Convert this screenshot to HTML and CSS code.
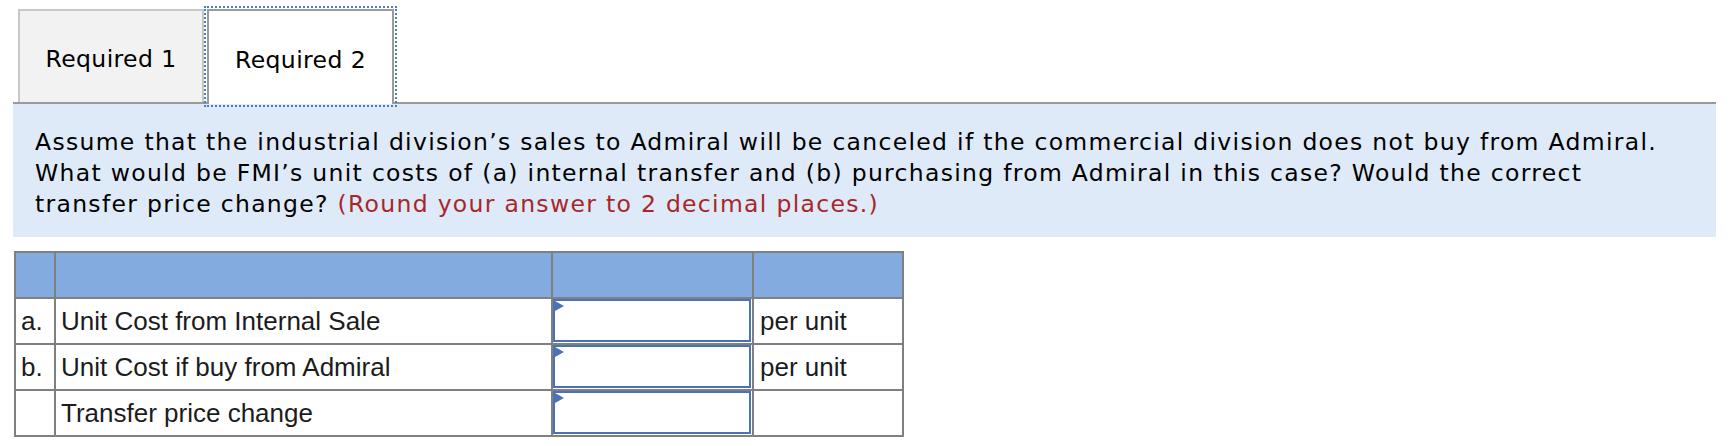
FILE: index.html
```html
<!DOCTYPE html>
<html lang="en">
<head>
<meta charset="utf-8">
<title>Required 2</title>
<link rel="stylesheet" href="styles.css">
</head>
<body>
<div class="page">
  <div class="tabs">
    <div class="tab">Required 1</div>
    <div class="tab active">Required 2</div>
  </div>
  <div class="question">Assume that the industrial division’s sales to Admiral will be canceled if the commercial division does not buy from Admiral. What would be FMI’s unit costs of (a) internal transfer and (b) purchasing from Admiral in this case? Would the correct transfer price change? <span class="note">(Round your answer to 2 decimal places.)</span></div>
  <div class="answers">
    <div class="cell head"></div>
    <div class="cell head"></div>
    <div class="cell head"></div>
    <div class="cell head"></div>

    <div class="cell">a.</div>
    <div class="cell">Unit Cost from Internal Sale</div>
    <div class="cell entry"><span class="ans"><input class="field" type="text"></span></div>
    <div class="cell unit">per unit</div>

    <div class="cell">b.</div>
    <div class="cell">Unit Cost if buy from Admiral</div>
    <div class="cell entry"><span class="ans"><input class="field" type="text"></span></div>
    <div class="cell unit">per unit</div>

    <div class="cell"></div>
    <div class="cell">Transfer price change</div>
    <div class="cell entry"><span class="ans"><input class="field" type="text"></span></div>
    <div class="cell unit"></div>
  </div>
</div>
</body>
</html>
```

FILE: styles.css
```css
* { box-sizing: border-box; }

body {
  margin: 0;
  background: #ffffff;
  font-family: "DejaVu Sans", Verdana, sans-serif;
  color: #000000;
}

.page {
  margin-left: 13px;
  width: 1703px;
}

.tabs {
  display: flex;
  gap: 3px;
  padding: 9px 0 0 5px;
  border-bottom: 2px solid #9a9a9a;
}

.tab {
  width: 186px;
  height: 93px;
  display: flex;
  align-items: center;
  justify-content: center;
  padding-top: 4px;
  font-size: 23.5px;
  letter-spacing: 0.4px;
  background: #f2f2f2;
  border: 2px solid #c8c8c8;
  border-bottom: none;
}

.tab.active {
  width: 187px;
  height: 95px;
  margin-bottom: -2px;
  background: #ffffff;
  border-color: #9a9a9a;
  outline: 2px dotted #4a7cc6;
  outline-offset: 1px;
}

.question {
  background: #deeaf7;
  padding: 23px 40px 17px 22px;
  font-size: 23.5px;
  letter-spacing: 1.3px;
  line-height: 31px;
}

.note {
  color: #a8262a;
}

.answers {
  display: grid;
  grid-template-columns: 38px 495px 199px 148px;
  grid-auto-rows: 44px;
  gap: 2px;
  padding: 2px;
  margin: 14px 0 0 1px;
  width: max-content;
  background: #808080;
  font-family: "Liberation Sans", Arial, sans-serif;
  font-size: 26px;
  color: #1c1c1c;
}

.cell {
  display: flex;
  align-items: center;
  padding-left: 5px;
  background: #ffffff;
}

.cell.head {
  background: #84abdf;
}

.cell.unit {
  padding-left: 6px;
}

.cell.entry {
  padding: 0 1px 1px 0;
  align-items: stretch;
}

.ans {
  position: relative;
  display: block;
  flex: 1;
}

.ans::before {
  content: "";
  position: absolute;
  left: 2px;
  top: 2px;
  border-left: 9px solid #4a72b5;
  border-top: 5px solid transparent;
  border-bottom: 5px solid transparent;
}

.field {
  display: block;
  width: 100%;
  height: 100%;
  margin: 0;
  padding: 0 6px;
  border: 2px solid #4a72b5;
  border-radius: 0;
  background: #ffffff;
  font: inherit;
  outline: none;
}
```
